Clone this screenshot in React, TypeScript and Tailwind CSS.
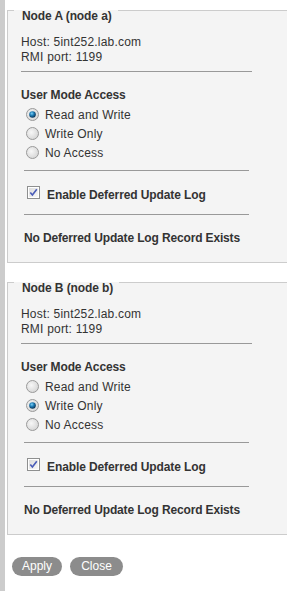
import React from 'react';

type Access = 'rw' | 'wo' | 'none';

const accessOptions: { id: Access; label: string }[] = [
  { id: 'rw', label: 'Read and Write' },
  { id: 'wo', label: 'Write Only' },
  { id: 'none', label: 'No Access' },
];

function Radio({ checked }: { checked: boolean }) {
  return (
    <svg width="13" height="13" viewBox="0 0 13 13" className="shrink-0">
      <defs>
        <radialGradient id="rbg" cx="0.4" cy="0.4" r="0.7">
          <stop offset="0" stopColor="#f7f7f7" />
          <stop offset="1" stopColor="#d2d2d2" />
        </radialGradient>
        <radialGradient id="rdot" cx="0.4" cy="0.35" r="0.6">
          <stop offset="0" stopColor="#7fd0f6" />
          <stop offset="0.5" stopColor="#1f7fb8" />
          <stop offset="1" stopColor="#0b3a60" />
        </radialGradient>
      </defs>
      <circle cx="6.5" cy="6.5" r="6" fill="url(#rbg)" stroke="#9a9a9a" strokeWidth="1" />
      {checked && <circle cx="6.5" cy="6.5" r="3.3" fill="url(#rdot)" />}
    </svg>
  );
}

function Checkbox() {
  return (
    <svg width="13" height="13" viewBox="0 0 13 13" className="shrink-0">
      <defs>
        <linearGradient id="cbg" x1="0" y1="0" x2="1" y2="1">
          <stop offset="0" stopColor="#dcdcdc" />
          <stop offset="1" stopColor="#f8f8f8" />
        </linearGradient>
      </defs>
      <rect x="0.5" y="0.5" width="12" height="12" fill="#fff" stroke="#8e8f8f" />
      <rect x="2" y="2" width="9" height="9" fill="url(#cbg)" />
      <path d="M3.3 6.4 L5.4 9 L9.8 3.2" fill="none" stroke="#4a5cb8" strokeWidth="1.6" />
    </svg>
  );
}

function NodePanel({ title, access }: { title: string; access: Access }) {
  return (
    <div className="w-[300px] border-l border-b border-[#cccccc] bg-[#f4f4f4] pl-[13px] pb-[16px]">
      {/* top edge, broken by the legend */}
      <div className="-ml-[13px] flex items-start">
        <div className="w-[6px] border-t border-[#cccccc]" />
        <span className="pl-[8px] pr-[6px] text-[12px] leading-[12px] font-bold tracking-[-0.1px]">{title}</span>
        <div className="flex-1 border-t border-[#cccccc]" />
      </div>

      <div className="mt-[13px] leading-[15px] tracking-[0.2px]">
        <div>Host: 5int252.lab.com</div>
        <div>RMI port: 1199</div>
      </div>
      <div className="mt-[6px] w-[231px] border-t border-[#999999]" />

      <div className="mt-[16px] font-bold leading-[15px] tracking-[-0.1px]">User Mode Access</div>
      <div className="mt-[3px] flex flex-col pl-[5px]">
        {accessOptions.map((opt) => (
          <div key={opt.id} className="flex h-[19px] items-start gap-[6px]">
            <div className="mt-[2px]">
              <Radio checked={opt.id === access} />
            </div>
            <span className="leading-[19px] tracking-[0.2px]">{opt.label}</span>
          </div>
        ))}
      </div>
      <div className="mt-[7px] ml-[3px] w-[225px] border-t border-[#999999]" />

      <div className="mt-[17px] flex items-start gap-[7px] pl-[6px]">
        <div className="-mt-[2px]">
          <Checkbox />
        </div>
        <span className="font-bold leading-[15px] tracking-[-0.1px]">Enable Deferred Update Log</span>
      </div>
      <div className="mt-[11px] ml-[3px] w-[225px] border-t border-[#999999]" />

      <div className="mt-[16px] ml-[3px] font-bold leading-[15px] tracking-[-0.15px]">
        No Deferred Update Log Record Exists
      </div>
    </div>
  );
}

export default function App() {
  return (
    <div
      className="flex min-h-[591px] overflow-hidden bg-white text-[12px] text-[#333333]"
      style={{ fontFamily: '"Liberation Sans", Arial, sans-serif' }}
    >
      <div className="w-[5px] shrink-0 bg-[#cccccc]" />
      <div className="flex-1 min-w-0 pl-[2px] pt-[10px]">
        <NodePanel title="Node A (node a)" access="rw" />
        <div className="mt-[19px]">
          <NodePanel title="Node B (node b)" access="wo" />
        </div>
        <div className="mt-[22px] ml-[5px] flex gap-[8px]">
          <button className="h-[19px] w-[50px] rounded-full bg-[#8c8c8c] text-[12px] leading-[19px] text-white">
            Apply
          </button>
          <button className="h-[19px] w-[53px] rounded-full bg-[#8c8c8c] text-[12px] leading-[19px] text-white">
            Close
          </button>
        </div>
      </div>
    </div>
  );
}
